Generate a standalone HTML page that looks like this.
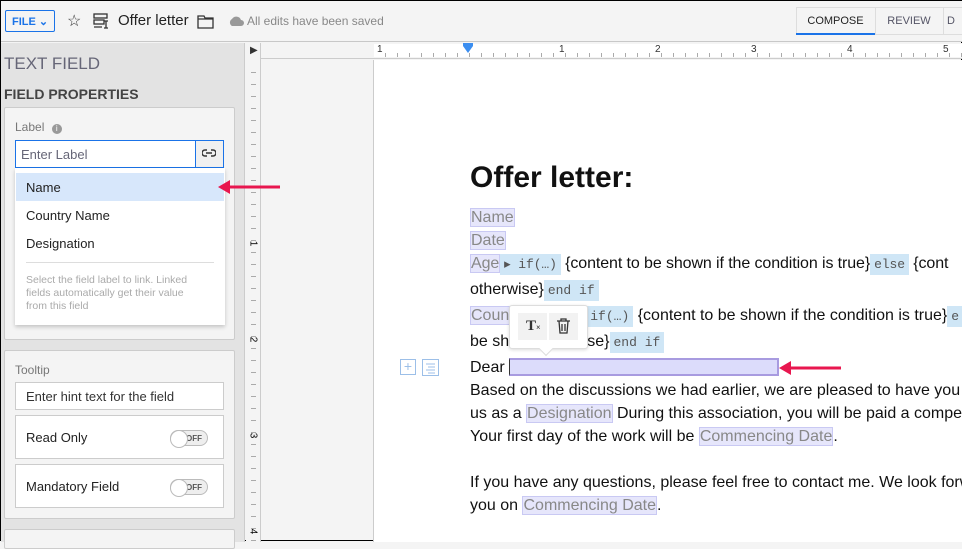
<!DOCTYPE html>
<html><head><style>
*{box-sizing:border-box;margin:0;padding:0}
body{width:962px;height:541px;overflow:hidden;position:relative;font-family:"Liberation Sans",sans-serif;background:#f4f4f4;border:1px solid #000}
.a{position:absolute}
.f{background:#e6e6fb;border:1px solid #c9c9f3;color:#888}
.c{font-family:"Liberation Mono",monospace;font-size:13px;background:#cfe6f6;color:#555;padding:3px 4px}
.sp{display:inline-block}
.doc div{position:absolute;left:469px;font-size:16px;color:#111;white-space:nowrap}
.card{background:#f4f4f4;border:1px solid #ccc;border-radius:2px}
.tog{width:38px;height:16px;border:1px solid #bbb;border-radius:9px;background:#eee;font-size:8px;color:#555;font-weight:bold;padding:3px 0 0 15px}
.tog:before{content:"";position:absolute;left:-1px;top:-1px;width:16px;height:16px;border-radius:50%;background:#fff;border:1px solid #bbb}
</style></head><body>
<div class="a" style="left:0;top:0;width:962px;height:41px;border-bottom:1px solid #c8c8c8;background:#f4f4f4"></div>
<div class="a" style="left:4px;top:9px;width:50px;height:22px;border:1px solid #1a73e8;border-radius:2px;color:#1a73e8;font-size:11px;font-weight:bold;padding:4px 0 0 6px">FILE ⌄</div>
<div class="a" style="left:66px;top:10px;font-size:16px;color:#333">☆</div>
<svg class="a" style="left:92px;top:12px" width="16" height="16"><g fill="none" stroke="#333" stroke-width="1.3"><rect x="1" y="1" width="13" height="4"/><rect x="1" y="7" width="10" height="4"/><path d="M1 14h8M13 8v7M11 8h4M11 15h4"/></g></svg>
<div class="a" style="left:117px;top:11px;font-size:15px;color:#222">Offer letter</div>
<svg class="a" style="left:196px;top:13px" width="17" height="15"><path d="M1 2h6l1 2h8v10H1z M1 5h15" fill="none" stroke="#333" stroke-width="1.3"/></svg>
<svg class="a" style="left:227px;top:15px" width="16" height="10"><path d="M4 10a4 4 0 0 1 0-7 5 5 0 0 1 9 1 3 3 0 0 1 0 6z" fill="#999"/></svg>
<div class="a" style="left:246px;top:13px;font-size:12px;color:#888">All edits have been saved</div>
<div class="a" style="left:795px;top:6px;width:170px;height:28px;border:1px solid #ddd;background:#f4f4f4"></div>
<div class="a" style="left:795px;top:6px;width:79px;height:28px;border-bottom:2px solid #1a73e8;font-size:11px;color:#222;text-align:center;padding-top:8px">COMPOSE</div>
<div class="a" style="left:874px;top:6px;width:1px;height:28px;background:#ddd"></div>
<div class="a" style="left:874px;top:6px;width:68px;font-size:11px;color:#556;text-align:center;padding-top:8px">REVIEW</div>
<div class="a" style="left:942px;top:6px;width:1px;height:28px;background:#ddd"></div>
<div class="a" style="left:946px;top:14px;font-size:11px;color:#556">D</div>
<!-- sidebar -->
<div class="a" style="left:0;top:42px;width:244px;height:499px;background:#e3e3e3;border-right:1px solid #ccc"></div>
<div class="a" style="left:3px;top:53px;font-size:17px;color:#667">TEXT FIELD</div>
<div class="a" style="left:3px;top:85px;font-size:14px;font-weight:bold;color:#444">FIELD PROPERTIES</div>
<div class="a card" style="left:3px;top:106px;width:231px;height:233px"></div>
<div class="a" style="left:14px;top:119px;font-size:12px;color:#777">Label <span style="display:inline-block;width:10px;height:10px;border-radius:50%;background:#999;color:#fff;font-size:8px;text-align:center;line-height:10px;margin-left:4px">i</span></div>
<div class="a" style="left:14px;top:139px;width:209px;height:28px;border:1px solid #1a73e8;background:#fff"></div>
<div class="a" style="left:194px;top:140px;width:1px;height:26px;background:#1a73e8"></div>
<div class="a" style="left:195px;top:140px;width:27px;height:26px;background:#f0f0f0"></div>
<svg class="a" style="left:201px;top:148px" width="14" height="9"><g fill="none" stroke="#333" stroke-width="1.5"><path d="M5 1H3a3 3 0 0 0 0 6h2M9 1h2a3 3 0 0 1 0 6H9M4 4h6"/></g></svg>
<div class="a" style="left:20px;top:146px;font-size:13px;color:#667">Enter Label</div>
<div class="a" style="left:14px;top:167px;width:210px;height:157px;background:#fff;box-shadow:0 2px 4px rgba(0,0,0,.2)"></div>
<div class="a" style="left:15px;top:172px;width:208px;height:28px;background:#d7e7fb"></div>
<div class="a" style="left:25px;top:179px;font-size:13px;color:#222">Name</div>
<div class="a" style="left:25px;top:207px;font-size:13px;color:#222">Country Name</div>
<div class="a" style="left:25px;top:235px;font-size:13px;color:#222">Designation</div>
<div class="a" style="left:25px;top:261px;width:188px;height:1px;background:#ddd"></div>
<div class="a" style="left:25px;top:273px;font-size:10.5px;line-height:13px;color:#aaa;width:180px">Select the field label to link. Linked fields automatically get their value from this field</div>
<div class="a card" style="left:3px;top:349px;width:231px;height:169px"></div>
<div class="a" style="left:14px;top:362px;font-size:12px;color:#777">Tooltip</div>
<div class="a" style="left:14px;top:381px;width:209px;height:28px;border:1px solid #ccc;background:#fff;font-size:13px;color:#333;padding:6px 10px">Enter hint text for the field</div>
<div class="a" style="left:14px;top:414px;width:209px;height:44px;border:1px solid #ccc;background:#fff;font-size:13px;color:#222;padding:14px 10px">Read Only</div>
<div class="a tog" style="left:169px;top:429px">OFF</div>
<div class="a" style="left:14px;top:463px;width:209px;height:44px;border:1px solid #ccc;background:#fff;font-size:13px;color:#222;padding:14px 10px">Mandatory Field</div>
<div class="a tog" style="left:169px;top:478px">OFF</div>
<div class="a card" style="left:3px;top:528px;width:231px;height:20px"></div>
<!-- rulers -->
<div class="a" style="left:245px;top:42px;width:15px;height:499px;background:#f4f4f4;border-right:1px solid #ccc"></div>
<div class="a" style="left:249px;top:44px;font-size:10px;color:#333">▶</div>
<div class="a" style="left:260px;top:42px;width:702px;height:16px;background:#f4f4f4;border-bottom:1px solid #ccc"></div>
<div class="a" style="left:373px;top:43px;width:589px;height:13px;background:#fff;background-image:repeating-linear-gradient(90deg,transparent 0 11px,#aaa 11px 12px);background-size:12px 4px;background-repeat:repeat-x;background-position:0 9px"></div>
<div class="a" style="left:376px;top:43px;font-size:10px;color:#333">1</div>
<div class="a" style="left:558px;top:43px;font-size:10px;color:#333">1</div>
<div class="a" style="left:654px;top:43px;font-size:10px;color:#333">2</div>
<div class="a" style="left:750px;top:43px;font-size:10px;color:#333">3</div>
<div class="a" style="left:846px;top:43px;font-size:10px;color:#333">4</div>
<div class="a" style="left:942px;top:43px;font-size:10px;color:#333">5</div>
<div class="a" style="left:462px;top:42px;width:10px;height:10px;background:#3b8ef0;clip-path:polygon(0 0,100% 0,100% 30%,50% 100%,0 30%)"></div>
<div class="a" style="left:246px;top:60px;width:12px;height:481px;background-image:repeating-linear-gradient(180deg,transparent 0 11px,#aaa 11px 12px);background-size:5px 12px;background-repeat:repeat-y;background-position:4px 0"></div>
<div class="a" style="left:249px;top:237px;font-size:10px;transform:rotate(90deg)">1</div>
<div class="a" style="left:249px;top:333px;font-size:10px;transform:rotate(90deg)">2</div>
<div class="a" style="left:249px;top:429px;font-size:10px;transform:rotate(90deg)">3</div>
<div class="a" style="left:249px;top:525px;font-size:10px;transform:rotate(90deg)">4</div>
<!-- page -->
<div class="a" style="left:372px;top:59px;width:590px;height:482px;background:#fff;border-left:1px solid #ccc"></div>
<div class="doc">
<div style="top:160px;font-size:30px;font-weight:bold;color:#111">Offer letter:</div>
<div style="top:208px"><span class="f">Name</span></div>
<div style="top:231px"><span class="f">Date</span></div>
<div style="top:254px;letter-spacing:-0.1px"><span class="f">Age</span><span class="c">▸ if(…)</span> {content to be shown if the condition is true}<span class="c">else</span> {cont</div>
<div style="top:280px">otherwise}<span class="c">end if</span></div>
<div style="top:306px"><span class="f">Coun</span><span class="sp" style="width:76px"></span><span class="c">if(…)</span> {content to be shown if the condition is true}<span class="c">e</span></div>
<div style="top:332px">be sh<span class="sp" style="width:63px"></span>wise}<span class="c">end if</span></div>
<div style="top:358px">Dear</div>
<div style="top:381px">Based on the discussions we had earlier, we are pleased to have you</div>
<div style="top:404px">us as a <span class="f">Designation</span> During this association, you will be paid a compen</div>
<div style="top:427px">Your first day of the work will be <span class="f">Commencing Date</span>.</div>
<div style="top:473px">If you have any questions, please feel free to contact me. We look forw</div>
<div style="top:496px">you on <span class="f">Commencing Date</span>.</div>
</div>
<div class="a" style="left:508px;top:357px;width:270px;height:18px;background:#dcdcfb;border:2px solid #a89be0;border-left:1px solid #333"></div>
<div class="a" style="left:508px;top:304px;width:79px;height:44px;background:#fff;border:1px solid #ddd;border-radius:3px;box-shadow:0 1px 3px rgba(0,0,0,.15)"></div>
<div class="a" style="left:540px;top:343px;width:10px;height:10px;background:#fff;border-right:1px solid #ddd;border-bottom:1px solid #ddd;transform:rotate(45deg)"></div>
<div class="a" style="left:517px;top:312px;width:29px;height:27px;background:#f2f2f2;font-family:'Liberation Serif',serif;font-weight:bold;font-size:15px;padding:5px 0 0 8px;color:#333">T<span style="font-size:8px">×</span></div>
<div class="a" style="left:548px;top:312px;width:29px;height:27px;background:#f2f2f2"></div>
<svg class="a" style="left:555px;top:317px" width="15" height="16"><g fill="none" stroke="#333" stroke-width="1.3"><path d="M1 3h13M5 3V1h5v2M3 3l1 12h7l1-12M6 6v7M9 6v7"/></g></svg>
<div class="a" style="left:399px;top:358px;width:16px;height:16px;border:1px solid #9cbfe8;color:#9cbfe8;font-size:14px;line-height:13px;text-align:center">+</div>
<svg class="a" style="left:421px;top:358px" width="17" height="17"><g fill="none" stroke="#9cbfe8"><rect x=".5" y=".5" width="16" height="16"/><path d="M4 5h9M6 8h7M4 11h9M6 14h7"/></g></svg>
<svg class="a" style="left:215px;top:177px;z-index:5" width="66" height="18"><path d="M64 9H10" stroke="#e8174f" stroke-width="3"/><path d="M2 9l12-7v14z" fill="#e8174f"/></svg>
<svg class="a" style="left:776px;top:358px;z-index:5" width="66" height="18"><path d="M64 9H10" stroke="#e8174f" stroke-width="3"/><path d="M2 9l12-7v14z" fill="#e8174f"/></svg>
</body></html>
